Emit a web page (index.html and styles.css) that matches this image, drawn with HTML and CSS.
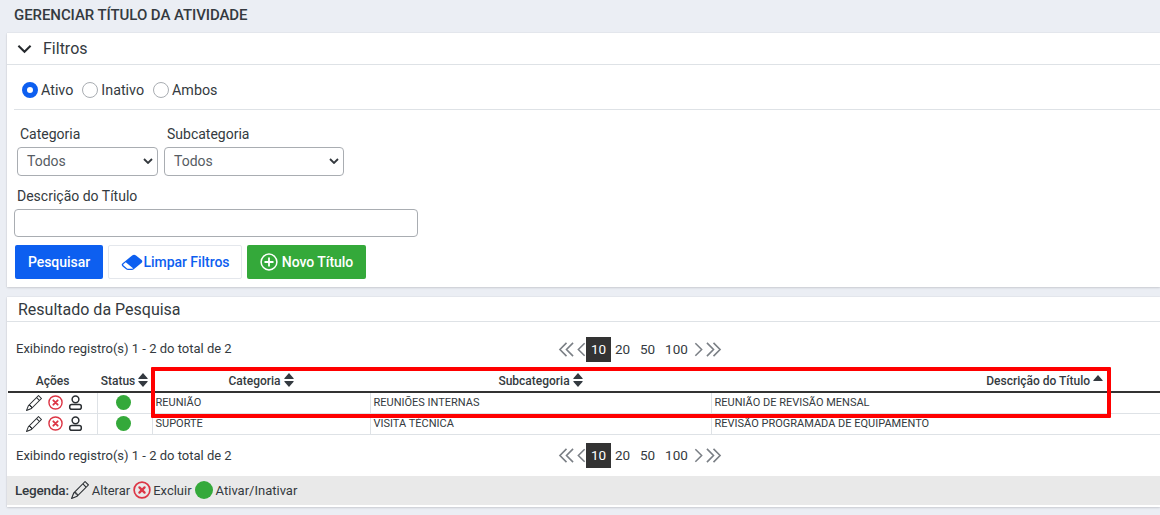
FILE: index.html
```html
<!DOCTYPE html>
<html lang="pt-BR">
<head>
<meta charset="utf-8">
<title>Gerenciar Título da Atividade</title>
<link rel="stylesheet" href="styles.css">
</head>
<body>
<svg class="defs" width="0" height="0" aria-hidden="true">
  <defs>
    <symbol id="pencil" viewBox="0 0 16 16"><path fill="currentColor" d="M12.146.146a.5.5 0 0 1 .708 0l3 3a.5.5 0 0 1 0 .708l-10 10a.5.5 0 0 1-.168.11l-5 2a.5.5 0 0 1-.65-.65l2-5a.5.5 0 0 1 .11-.168l10-10zM11.207 2.5 13.5 4.793 14.793 3.500 12.500 1.207 11.207 2.500zm1.586 3L10.500 3.207 4 9.707V10h.5a.5.5 0 0 1 .5.5v.5h.5a.5.5 0 0 1 .5.5v.5h.293l6.500-6.500zm-9.761 5.175-.106.106-1.528 3.821 3.821-1.528.106-.106A.5.5 0 0 1 5 12.500V12h-.5a.5.5 0 0 1-.5-.5V11h-.5a.5.5 0 0 1-.468-.325z"/></symbol>
    <symbol id="xcircle" viewBox="0 0 16 16"><circle cx="8" cy="8" r="7" fill="none" stroke="currentColor" stroke-width="1.500"/><path fill="none" stroke="currentColor" stroke-width="2" stroke-linecap="round" d="M5.700 5.700l4.600 4.600M10.300 5.700l-4.600 4.600"/></symbol>
    <symbol id="person" viewBox="0 0 16 16"><circle cx="8" cy="4.600" r="3.600" fill="none" stroke="currentColor" stroke-width="1.600"/><rect x="1.800" y="10.200" width="12.400" height="5" rx="2.200" fill="none" stroke="currentColor" stroke-width="1.600"/></symbol>
    <symbol id="updown" viewBox="0 0 10 14"><path fill="currentColor" d="M5 0l4.600 5.200a.5.5 0 0 1-.4.8H.8a.5.5 0 0 1-.4-.8zM5 14L.4 8.800a.5.5 0 0 1 .4-.8h8.400a.5.5 0 0 1 .4.8z"/></symbol>
    <symbol id="first" viewBox="0 0 18 16"><path fill="none" stroke="currentColor" stroke-width="1.700" d="M9 1L2 8l7 7M16 1L9 8l7 7"/></symbol>
    <symbol id="prev" viewBox="0 0 10 16"><path fill="none" stroke="currentColor" stroke-width="1.700" d="M8.500 1L1.500 8l7 7"/></symbol>
    <symbol id="next" viewBox="0 0 10 16"><path fill="none" stroke="currentColor" stroke-width="1.700" d="M1.500 1l7 7-7 7"/></symbol>
    <symbol id="last" viewBox="0 0 18 16"><path fill="none" stroke="currentColor" stroke-width="1.700" d="M2 1l7 7-7 7M9 1l7 7-7 7"/></symbol>
  </defs>
</svg>

<h1 class="page-title">GERENCIAR TÍTULO DA ATIVIDADE</h1>

<section class="card filters">
  <header class="card-head">
    <svg class="chevron" viewBox="0 0 16 10" width="15" height="10"><path fill="none" stroke="currentColor" stroke-width="2.200" d="M1.500 1.500L8 8l6.500-6.500"/></svg>
    <span>Filtros</span>
  </header>
  <div class="radios">
    <label class="radio"><span class="dot on"></span>Ativo</label>
    <label class="radio"><span class="dot"></span>Inativo</label>
    <label class="radio"><span class="dot"></span>Ambos</label>
  </div>
  <div class="selects">
    <div class="field f-cat">
      <label class="lbl">Categoria</label>
      <div class="select">Todos<svg viewBox="0 0 10 6" width="10" height="6"><path fill="none" stroke="currentColor" stroke-width="1.800" d="M1 1l4 4 4-4"/></svg></div>
    </div>
    <div class="field f-sub">
      <label class="lbl">Subcategoria</label>
      <div class="select">Todos<svg viewBox="0 0 10 6" width="10" height="6"><path fill="none" stroke="currentColor" stroke-width="1.800" d="M1 1l4 4 4-4"/></svg></div>
    </div>
  </div>
  <div class="desc">
    <label class="lbl">Descrição do Título</label>
    <div class="input"></div>
  </div>
  <div class="buttons">
    <button class="btn primary">Pesquisar</button>
    <button class="btn outline"><svg viewBox="0 0 16 16" width="22" height="18" preserveAspectRatio="none"><path fill="#0d5ff0" d="M8.086 2.207a2 2 0 0 1 2.828 0l3.879 3.879a2 2 0 0 1 0 2.828l-5.500 5.500A2 2 0 0 1 7.879 15H5.120a2 2 0 0 1-1.414-.586l-2.500-2.500a2 2 0 0 1 0-2.828l6.879-6.879zm.66 11.340L3.453 8.254 1.914 9.793a1 1 0 0 0 0 1.414l2.500 2.500a1 1 0 0 0 .707.293H7.880a1 1 0 0 0 .707-.293l.16-.16z"/></svg>Limpar Filtros</button>
    <button class="btn success"><svg viewBox="0 0 18 18" width="18" height="18"><circle cx="9" cy="9" r="7.900" fill="none" stroke="#fff" stroke-width="1.500"/><path stroke="#fff" stroke-width="1.800" d="M9 4.500v9M4.500 9h9"/></svg>Novo Título</button>
  </div>
</section>

<section class="card results">
  <header class="res-head">Resultado da Pesquisa</header>
  <div class="pager-row top">
    <span class="count">Exibindo registro(s) 1 - 2 do total de 2</span>
    <nav class="pager">
      <svg class="pg" width="17" height="15"><use href="#first"/></svg>
      <svg class="pg" width="9" height="15"><use href="#prev"/></svg>
      <span class="pg-num active">10</span><span class="pg-num">20</span><span class="pg-num">50</span><span class="pg-num wide">100</span>
      <svg class="pg" width="9" height="15"><use href="#next"/></svg>
      <svg class="pg" width="17" height="15"><use href="#last"/></svg>
    </nav>
  </div>
  <div class="table-wrap">
    <table class="grid">
      <colgroup><col class="c1"><col class="c2"><col class="c3"><col class="c4"><col class="c5"></colgroup>
      <thead>
        <tr>
          <th>Ações</th>
          <th>Status <svg class="sort" width="10" height="14"><use href="#updown"/></svg></th>
          <th>Categoria <svg class="sort" width="10" height="14"><use href="#updown"/></svg></th>
          <th>Subcategoria <svg class="sort" width="10" height="14"><use href="#updown"/></svg></th>
          <th class="th-desc">Descrição do Título <svg class="sort up" width="10" height="6" viewBox="0 0 10 6"><path fill="currentColor" d="M5 0l4.600 5.200a.5.5 0 0 1-.4.8H.8a.5.5 0 0 1-.4-.8z"/></svg></th>
        </tr>
      </thead>
      <tbody>
        <tr>
          <td class="acts"><svg class="ic dark" width="16" height="16"><use href="#pencil"/></svg><svg class="ic red" width="15" height="15"><use href="#xcircle"/></svg><svg class="ic dark" width="15" height="15"><use href="#person"/></svg></td>
          <td class="st"><span class="led"></span></td>
          <td>REUNIÃO</td><td>REUNIÕES INTERNAS</td><td>REUNIÃO DE REVISÃO MENSAL</td>
        </tr>
        <tr>
          <td class="acts"><svg class="ic dark" width="16" height="16"><use href="#pencil"/></svg><svg class="ic red" width="15" height="15"><use href="#xcircle"/></svg><svg class="ic dark" width="15" height="15"><use href="#person"/></svg></td>
          <td class="st"><span class="led"></span></td>
          <td>SUPORTE</td><td>VISITA TÉCNICA</td><td>REVISÃO PROGRAMADA DE EQUIPAMENTO</td>
        </tr>
      </tbody>
    </table>
    <div class="highlight"></div>
  </div>
  <div class="pager-row bottom">
    <span class="count">Exibindo registro(s) 1 - 2 do total de 2</span>
    <nav class="pager">
      <svg class="pg" width="17" height="15"><use href="#first"/></svg>
      <svg class="pg" width="9" height="15"><use href="#prev"/></svg>
      <span class="pg-num active">10</span><span class="pg-num">20</span><span class="pg-num">50</span><span class="pg-num wide">100</span>
      <svg class="pg" width="9" height="15"><use href="#next"/></svg>
      <svg class="pg" width="17" height="15"><use href="#last"/></svg>
    </nav>
  </div>
  <footer class="legend">
    <strong>Legenda:</strong>
    <svg class="dark" width="18" height="18"><use href="#pencil"/></svg><span>Alterar</span>
    <svg class="red tight" width="18" height="18"><use href="#xcircle"/></svg><span>Excluir</span>
    <span class="led big"></span><span>Ativar/Inativar</span>
  </footer>
</section>
</body>
</html>
```
FILE: styles.css
```css
* { box-sizing: border-box; }
html, body { height: 100%; }
body {
  margin: 0;
  padding: 0 0 0 7px;
  background: #ebeef4;
  font-family: Roboto, "Liberation Sans", sans-serif;
  color: #343a40;
  font-size: 14px;
  overflow: hidden;
}
.defs { position: absolute; }
.page-title {
  margin: 0;
  padding: 0 0 0 7px;
  height: 33px;
  line-height: 31px;
  font-size: 15px;
  font-weight: 500;
  color: #343a40;
  letter-spacing: -0.07px;
}
.card {
  background: #fff;
  box-shadow: 0 1px 2px rgba(0,0,0,.12), 0 0 1px rgba(0,0,0,.15);
}
.filters { height: 254px; }
.card-head {
  height: 32px;
  border-bottom: 1px solid #dee2e6;
  display: flex;
  align-items: center;
  font-size: 16px;
  color: #343a40;
  padding-left: 10px;
}
.chevron { margin-right: 11px; color: #262a2e; }
.radios {
  margin: 0 0 0 7px;
  height: 45px;
  border-bottom: 1px solid #dee2e6;
  display: flex;
  align-items: center;
  gap: 9px;
  padding: 5px 0 0 8px;
}
.radio { display: flex; align-items: center; gap: 3px; font-size: 14.300px; }
.dot {
  width: 16px; height: 16px;
  border-radius: 50%;
  border: 1px solid #a9adb2;
  background: #fff;
}
.dot.on { border: 5px solid #0d5ff0; }
.selects { display: flex; gap: 6px; padding: 16px 0 0 10px; }
.field { display: flex; flex-direction: column; }
.f-cat { width: 141px; }
.f-sub { width: 180px; }
.lbl { font-size: 14px; line-height: 17px; padding-left: 3px; color: #343a40; }
.select {
  height: 29px;
  margin-top: 4px;
  border: 1px solid #a9adb2;
  border-radius: 4px;
  padding: 0 4px 2px 9px;
  display: flex;
  align-items: center;
  justify-content: space-between;
  color: #565c63;
  font-size: 14px;
}
.select svg { color: #33383d; }
.desc { padding: 12px 0 0 7px; }
.desc .lbl { display: block; }
.input {
  width: 404px;
  height: 28px;
  margin-top: 4px;
  border: 1px solid #a9adb2;
  border-radius: 4px;
}
.buttons { display: flex; gap: 5px; padding: 8px 0 0 8px; }
.btn {
  height: 34px;
  border-radius: 2px;
  border: 1px solid transparent;
  font: 500 14px/1 Roboto, "Liberation Sans", sans-serif;
  letter-spacing: -0.05px;
  display: flex;
  align-items: center;
  justify-content: center;
  padding: 0;
}
.primary { width: 88px; background: #0d5ff0; color: #fff; }
.outline { width: 134px; background: #fff; border-color: #e4e7ec; color: #0d5ff0; gap: 1px; }
.success { width: 119px; background: #34a93a; color: #fff; gap: 4px; }
.results { margin-top: 10px; height: 210px; }
.res-head {
  height: 25px;
  line-height: 26px;
  border-bottom: 1px solid #dee2e6;
  padding-left: 11px;
  font-size: 16px;
  color: #343a40;
}
.pager-row {
  position: relative;
  height: 40px;
  display: flex;
  align-items: center;
  padding-left: 9px;
  font-size: 13px;
}
.pager-row.top { margin-top: 7px; }
.pager-row.top .count { padding-bottom: 2px; }
.pager-row.bottom { height: 41px; }
.count { font-size: 13px; color: #343a40; }
.pager {
  position: absolute;
  left: 551px;
  display: flex;
  align-items: center;
  color: #343a40;
}
.pg { color: #7a7f85; }
.pg + .pg { margin-left: 2px; }
.pg-num { width: 25px; height: 25px; line-height: 25px; text-align: center; font-size: 13.500px; }
.pg-num.active + .pg-num { margin-left: -1px; }
.pg-num.wide { width: 33px; margin-right: 1px; }
.pg-num.active { background: #333; color: #fff; }
.table-wrap { position: relative; margin: 1px 0 0 1px; }
.grid { width: 100%; border-collapse: collapse; table-layout: fixed; font-size: 11px; color: #343a40; }
.c1 { width: 89px; } .c2 { width: 55px; } .c3 { width: 218px; } .c4 { width: 341px; }
.grid th {
  height: 22px;
  padding: 0;
  font-size: 12px;
  font-weight: 500;
  text-align: center;
  border-bottom: 2px solid #333;
  white-space: nowrap;
}
.grid th.th-desc { text-align: right; padding-right: 57px; }
.sort { vertical-align: -2px; color: #343a40; }
.sort.up { vertical-align: 4px; }
.grid td {
  height: 21px;
  padding: 0 0 0 3px;
  border-bottom: 1px solid #dee2e6;
  border-right: 1px solid #dee2e6;
  white-space: nowrap;
}
.grid td:last-child { border-right: 0; }
.grid td.acts { padding: 0 0 0 5px; text-align: center; }
.grid td.st { padding: 0 2px 0 0; text-align: center; }
.ic { vertical-align: middle; margin: 0 3px 0 3px; }
.ic + .ic + .ic { margin-left: 2px; }
.dark { color: #2b2f33; }
.red { color: #dc3545; }
.led {
  display: inline-block;
  width: 15px; height: 15px;
  border-radius: 50%;
  background: #34a93a;
  vertical-align: middle;
}
.highlight {
  position: absolute;
  left: 143px;
  top: -3px;
  width: 960px;
  height: 51px;
  border: 4px solid #f00;
  border-radius: 1px;
  pointer-events: none;
}
.legend {
  height: 29px;
  background: #e9e9e9;
  display: flex;
  align-items: center;
  gap: 3px;
  padding-left: 8px;
  font-size: 13px;
  color: #343a40;
}
.legend strong { font-weight: 500; font-size: 13.500px; letter-spacing: -0.2px; margin-right: -1px; }
.legend .tight { margin-right: -1px; }
.led.big { width: 18px; height: 18px; }
```
